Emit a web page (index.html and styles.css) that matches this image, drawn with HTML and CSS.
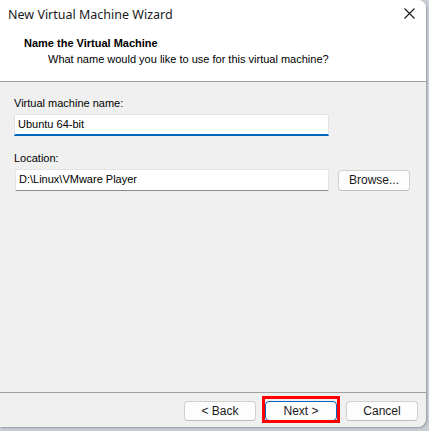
FILE: index.html
```html
<!DOCTYPE html>
<html>
<head>
<meta charset="utf-8">
<link rel="stylesheet" href="styles.css">
</head>
<body>
<div class="window">
  <div class="titlebar">
    <span class="title">New Virtual Machine Wizard</span>
    <svg class="close" width="11" height="11" viewBox="0 0 11 11"><path d="M0.5 0.5 L10.5 10.5 M10.5 0.5 L0.5 10.5" stroke="#1a1a1a" stroke-width="1.1" fill="none"/></svg>
  </div>
  <div class="header">
    <div class="h-title">Name the Virtual Machine</div>
    <div class="h-sub">What name would you like to use for this virtual machine?</div>
  </div>
  <div class="body">
    <div class="label">Virtual machine name:</div>
    <div class="input focused">Ubuntu 64-bit</div>
    <div class="label loc">Location:</div>
    <div class="row">
      <div class="input path">D:\Linux\VMware Player</div>
      <div class="btn browse">Browse...</div>
    </div>
  </div>
  <div class="footer">
    <div class="btn">&lt; Back</div>
    <div class="btn default highlight">Next &gt;</div>
    <div class="btn">Cancel</div>
  </div>
</div>
</body>
</html>
```
FILE: styles.css
```css
html, body {
  margin: 0;
  padding: 0;
}
body {
  width: 429px;
  height: 431px;
  background: #c9ced6;
  font-family: "Liberation Sans", Arial, sans-serif;
  font-size: 11px;
  color: #000;
  overflow: hidden;
}
.window {
  width: 426px;
  height: 427px;
  background: #f0f0f0;
  border-radius: 0 8px 8px 0;
  overflow: hidden;
  display: flex;
  flex-direction: column;
  box-shadow: 1px 1px 2px rgba(0,0,0,0.25);
}
.titlebar {
  height: 28px;
  flex: none;
  background: #fff;
  display: flex;
  align-items: center;
  justify-content: space-between;
  padding: 0 11px 0 8px;
}
.title {
  font-family: "Noto Sans", "Open Sans", sans-serif;
  font-size: 12.5px;
  color: #1a1a1a;
}
.close {
  display: block;
  margin-top: -1px;
}
.header {
  flex: none;
  background: #fff;
  border-bottom: 1px solid #a0a0a0;
  box-sizing: border-box;
  height: 54px;
  padding-top: 7px;
}
.h-title {
  font-weight: bold;
  line-height: 16px;
  padding-left: 24px;
}
.h-sub {
  line-height: 16px;
  padding-left: 48px;
}
.body {
  flex: 1;
  padding: 13px 0 0 14px;
  display: flex;
  flex-direction: column;
  align-items: flex-start;
}
.label {
  line-height: 16px;
  margin-bottom: 3px;
}
.label.loc {
  margin-top: 14px;
}
.input {
  box-sizing: border-box;
  width: 315px;
  height: 22px;
  background: #fff;
  border: 1px solid #e3e3e3;
  border-bottom-color: #8a8a8a;
  border-radius: 2px;
  padding: 0 3px;
  line-height: 19px;
}
.input.focused {
  border-bottom: 2px solid #0067c0;
  border-radius: 2px 2px 0 0;
}
.row {
  display: flex;
  align-items: center;
  gap: 9px;
}
.input.path {
  width: 314px;
  margin-left: 1px;
}
.btn {
  box-sizing: border-box;
  width: 72px;
  height: 20px;
  background: #fdfdfd;
  border: 1px solid #d0d0d0;
  border-bottom-color: #bdbdbd;
  border-radius: 4px;
  text-align: center;
  line-height: 18px;
  font-size: 12px;
  color: #1a1a1a;
}
.btn.browse {
  height: 21px;
  margin-top: 1px;
  line-height: 19px;
}
.footer {
  flex: none;
  box-sizing: border-box;
  height: 35px;
  border-top: 1px solid #a0a0a0;
  display: flex;
  justify-content: flex-end;
  gap: 9px;
  padding: 8px 8px 0 0;
}
.btn.default {
  border: 1px solid #0067c0;
}
.btn.highlight {
  position: relative;
}
.btn.highlight::after {
  content: "";
  position: absolute;
  left: -4px;
  right: -4px;
  top: -6px;
  bottom: -3px;
  border: 3px solid #f00;
}
```
